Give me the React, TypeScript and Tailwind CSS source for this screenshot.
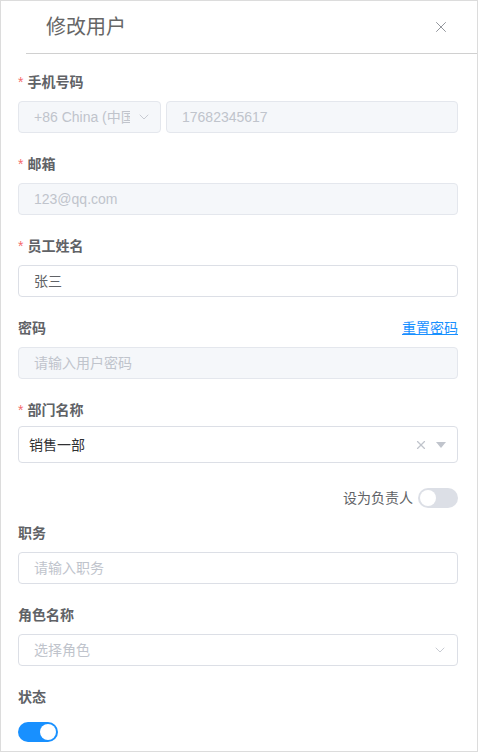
import { X, ChevronDown } from "lucide-react"

const font = { fontFamily: '"Liberation Sans", "Noto Sans CJK SC", sans-serif' }

function Label({ text, required }: { text: string; required?: boolean }) {
  return (
    <div className="h-[22px] leading-[22px] text-sm font-bold text-[#606266] flex items-center">
      {required && <span className="text-[#f56c6c] mr-1 font-normal">*</span>}
      {text}
    </div>
  )
}

function Input({ value, placeholder, disabled }: { value?: string; placeholder?: string; disabled?: boolean }) {
  return (
    <div
      className={`h-8 rounded border px-[15px] flex items-center text-sm ${
        disabled ? "bg-[#f5f7fa] border-[#e4e7ed] text-[#c0c4cc]" : "bg-white border-[#dcdfe6] text-[#606266]"
      }`}
    >
      {value ? value : <span className="text-[#c0c4cc]">{placeholder}</span>}
    </div>
  )
}

function Switch({ on }: { on?: boolean }) {
  return (
    <div className={`w-10 h-5 rounded-full p-[2px] flex ${on ? "bg-[#1890ff] justify-end" : "bg-[#dcdfe6] justify-start"}`}>
      <div className="w-4 h-4 rounded-full bg-white" />
    </div>
  )
}

export default function App() {
  return (
    <div className="w-[478px] h-[752px] bg-white border border-[#dcdcdc] overflow-hidden" style={font}>
      <div className="h-[52px] flex items-center justify-between pl-[45px] pr-[27px]">
        <span className="text-xl text-[#666666]">修改用户</span>
        <X className="w-[18px] h-[18px] text-[#909399]" strokeWidth={1.3} />
      </div>
      <div className="ml-[25px] border-t border-[#d0d0d0]" />

      <div className="pl-[17px] pr-[19px] pt-[17px]">
        <div className="mb-5">
          <Label text="手机号码" required />
          <div className="mt-2 flex gap-[5px]">
            <div className="w-[143px] h-8 rounded border bg-[#f5f7fa] border-[#e4e7ed] pl-[15px] pr-[8px] flex items-center text-sm text-[#c0c4cc]">
              <span className="flex-1 overflow-hidden whitespace-nowrap text-clip">+86 China (中国)</span>
              <ChevronDown className="w-4 h-4 ml-[6px] shrink-0" strokeWidth={1.3} />
            </div>
            <div className="flex-1">
              <Input value="17682345617" disabled />
            </div>
          </div>
        </div>

        <div className="mb-5">
          <Label text="邮箱" required />
          <div className="mt-2">
            <Input value="123@qq.com" disabled />
          </div>
        </div>

        <div className="mb-5">
          <Label text="员工姓名" required />
          <div className="mt-2">
            <Input value="张三" />
          </div>
        </div>

        <div className="mb-5">
          <div className="flex items-center justify-between">
            <Label text="密码" />
            <a className="text-sm text-[#1890ff] underline leading-[22px]">重置密码</a>
          </div>
          <div className="mt-2">
            <Input placeholder="请输入用户密码" disabled />
          </div>
        </div>

        <div>
          <Label text="部门名称" required />
          <div className="mt-[5px] h-[37px] rounded border border-[#dcdfe6] pl-[10px] pr-[11px] flex items-center text-sm text-[#303133]">
            <span className="flex-1">销售一部</span>
            <X className="w-[14px] h-[14px] text-[#c0c4cc] mr-[8px]" strokeWidth={2} />
            <svg width="10" height="6" viewBox="0 0 10 6">
              <path d="M0 0 L10 0 L5 6 Z" fill="#c0c4cc" />
            </svg>
          </div>
        </div>

        <div className="mt-[25px] mb-[14px] flex items-center justify-end gap-[5px]">
          <span className="text-sm text-[#606266]">设为负责人</span>
          <Switch />
        </div>

        <div className="mb-5">
          <Label text="职务" />
          <div className="mt-2">
            <Input placeholder="请输入职务" />
          </div>
        </div>

        <div className="mb-5">
          <Label text="角色名称" />
          <div className="mt-2 h-8 rounded border border-[#dcdfe6] pl-[15px] pr-[9px] flex items-center text-sm">
            <span className="flex-1 text-[#c0c4cc]">选择角色</span>
            <ChevronDown className="w-4 h-4 text-[#c0c4cc]" strokeWidth={1.3} />
          </div>
        </div>

        <div>
          <Label text="状态" />
          <div className="mt-[14px]">
            <Switch on />
          </div>
        </div>
      </div>
    </div>
  )
}
